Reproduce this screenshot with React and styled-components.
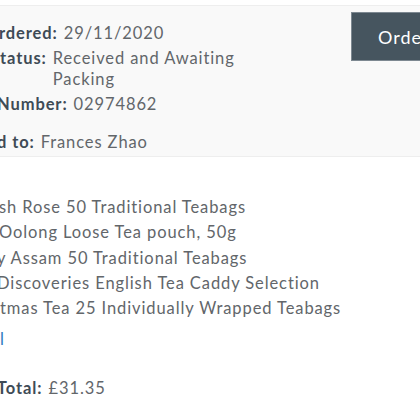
import styled, { createGlobalStyle } from 'styled-components';

const Global = createGlobalStyle`
  html, body {
    margin: 0;
    padding: 0;
    background: #ffffff;
  }
  body {
    font-family: Lato, "Open Sans", sans-serif;
    overflow: hidden;
  }
`;

const Page = styled.div`
  width: 420px;
  height: 420px;
  overflow: hidden;
  padding-top: 5px;
  box-sizing: border-box;
`;

const Card = styled.div`
  border-top: 1px solid #eeeeee;
`;

const Header = styled.div`
  background: #f9f9f9;
  display: flex;
  justify-content: space-between;
  align-items: flex-start;
  padding: 17px 0 0 0;
  height: 133px;
  border-bottom: 1px solid #eeeeee;
`;

const Details = styled.div`
  display: flex;
  flex-direction: column;
  gap: 4px;
`;

const Row = styled.div`
  display: flex;
  gap: 6px;
  font-size: 16.5px;
  line-height: 21px;
  letter-spacing: 0.9px;
  margin-left: ${(p) => p.$shift || 0}px;
  margin-top: ${(p) => p.$top || 0}px;
`;

const Label = styled.span`
  font-weight: 700;
  color: #3e4b56;
  white-space: nowrap;
  letter-spacing: 0.9px;
`;

const Value = styled.span`
  color: #62666a;
  width: ${(p) => p.$width || 'auto'};
`;

const OrderButton = styled.button`
  background: #46555f;
  border: 1px solid #7d8891;
  color: #ffffff;
  font-family: Lato, sans-serif;
  font-size: 18px;
  letter-spacing: 1px;
  white-space: nowrap;
  height: 49px;
  width: 150px;
  margin: -11px -81px 0 0;
  padding: 0 0 0 26px;
  text-align: left;
  flex-shrink: 0;
`;

const Body = styled.div`
  padding: 38px 0 0 0;
  height: 245px;
  display: flex;
  flex-direction: column;
`;

const Items = styled.ul`
  list-style: none;
  margin: 0;
  padding: 0;
`;

const Item = styled.li`
  font-size: 16.5px;
  line-height: 25.3px;
  letter-spacing: 0.9px;
  color: #62666a;
  white-space: nowrap;
  margin-left: ${(p) => p.$shift || 0}px;
`;

const MoreLink = styled.a`
  display: block;
  color: #2b7bbd;
  font-size: 16.5px;
  line-height: 21px;
  margin: 8px 0 0 0;
  text-decoration: none;
`;

const Total = styled(Row)`
  margin-top: 28px;
`;

const Footer = styled.div`
  border-top: 1px solid #ececec;
  background: #f6f6f6;
  height: 20px;
`;

const items = [
  { text: 'sh Rose 50 Traditional Teabags', shift: -1 },
  { text: 'Oolong Loose Tea pouch, 50g', shift: -1 },
  { text: 'y Assam 50 Traditional Teabags', shift: -3 },
  { text: 'Discoveries English Tea Caddy Selection', shift: -3 },
  { text: 'tmas Tea 25 Individually Wrapped Teabags', shift: 0 },
];

export default function App() {
  return (
    <Page>
      <Global />
      <Card>
        <Header>
          <Details>
            <Row $shift={-1}>
              <Label>rdered:</Label>
              <Value>29/11/2020</Value>
            </Row>
            <Row>
              <Label>tatus:</Label>
              <Value $width="200px">Received and Awaiting Packing</Value>
            </Row>
            <Row $shift={-3}>
              <Label>Number:</Label>
              <Value>02974862</Value>
            </Row>
            <Row $shift={-3} $top={13}>
              <Label>d to:</Label>
              <Value>Frances Zhao</Value>
            </Row>
          </Details>
          <OrderButton>Order Details</OrderButton>
        </Header>
        <Body>
          <Items>
            {items.map((it) => (
              <Item key={it.text} $shift={it.shift}>{it.text}</Item>
            ))}
          </Items>
          <MoreLink href="#">l</MoreLink>
          <Total $shift={-3}>
            <Label>Total:</Label>
            <Value>£31.35</Value>
          </Total>
        </Body>
        <Footer />
      </Card>
    </Page>
  );
}
